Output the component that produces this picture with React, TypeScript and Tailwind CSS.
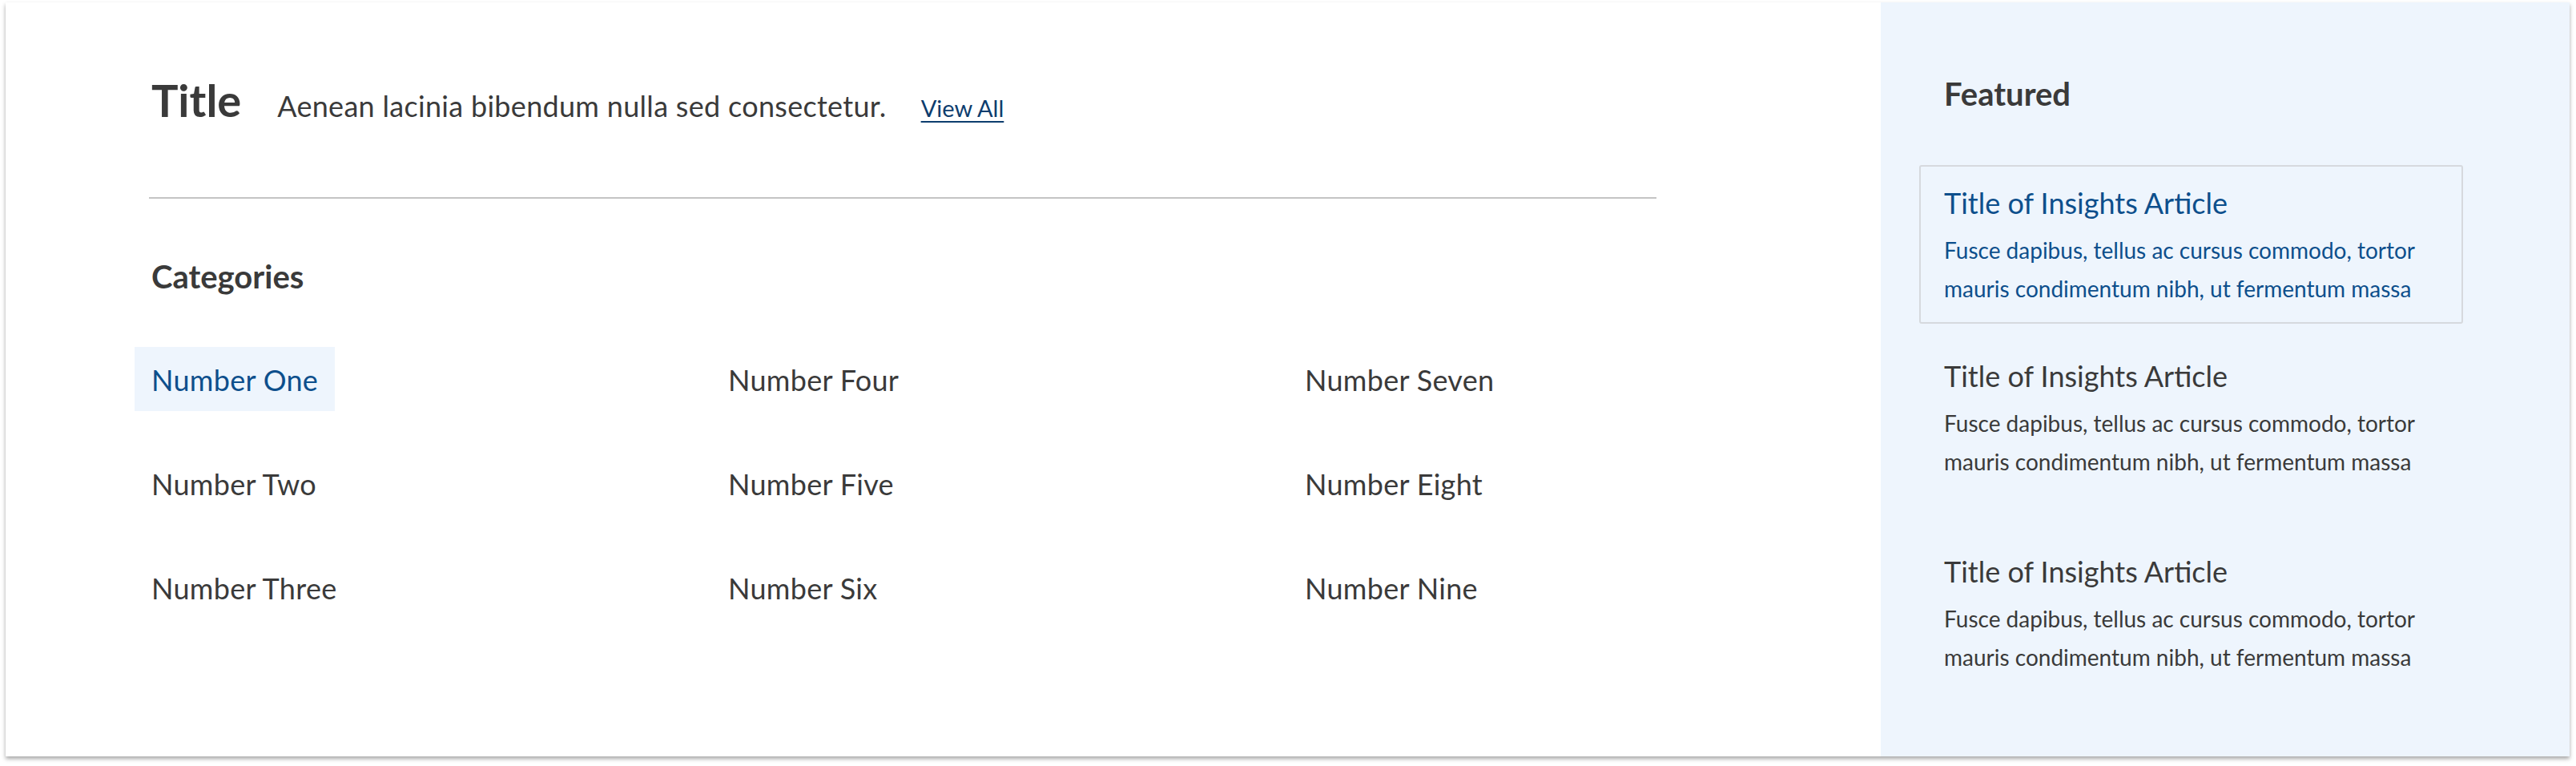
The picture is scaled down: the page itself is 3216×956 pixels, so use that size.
import React from "react";

const cats = [
  "Number One",
  "Number Four",
  "Number Seven",
  "Number Two",
  "Number Five",
  "Number Eight",
  "Number Three",
  "Number Six",
  "Number Nine",
];

const items = [
  { active: true, mt: "mt-[69px]" },
  { active: false, mt: "mt-[18px]" },
  { active: false, mt: "mt-[46px]" },
];

export default function App() {
  return (
    <div
      className="w-[3216px] h-[956px] bg-white overflow-hidden"
      style={{ fontFamily: "Lato, 'Noto Sans', sans-serif" }}
    >
      <div className="ml-[7px] mt-[3px] w-[3201px] h-[941px] flex bg-white shadow-[0_3px_5px_rgba(0,0,0,0.35)]">
        {/* Left section */}
        <div className="w-[2341px] pl-[182px] pt-[94px] flex flex-col">
          <div className="flex items-baseline h-[56px]">
            <h1 className="text-[56px] leading-[56px] font-bold text-[#3a3a3a]">Title</h1>
            <p className="ml-[45px] text-[36px] leading-[56px] tracking-[0.3px] text-[#3a3a3a]">
              Aenean lacinia bibendum nulla sed consectetur.
            </p>
            <a className="ml-[43px] text-[29px] leading-[56px] text-[#0d3d6e] underline decoration-[2px] underline-offset-[5px]">
              View All
            </a>
          </div>
          <div className="mt-[93px] ml-[-3px] w-[1882px] h-[2px] bg-[#c4c4c4]" />
          <h2 className="mt-[77px] text-[40px] leading-[40px] font-bold text-[#3a3a3a]">Categories</h2>
          <div className="mt-[68px] ml-[-21px] grid grid-cols-[720px_720px_720px] gap-y-[50px]">
            {cats.map((c, i) => (
              <div key={c} className="h-[80px]">
                <span
                  className={
                    i === 0
                      ? "inline-block h-[80px] px-[21px] pt-[17px] text-[36px] leading-[48px] tracking-[0.3px] bg-[#eef5fd] text-[#0d4f8c]"
                      : "inline-block h-[80px] px-[21px] pt-[17px] text-[36px] leading-[48px] tracking-[0.3px] text-[#3a3a3a]"
                  }
                >
                  {c}
                </span>
              </div>
            ))}
          </div>
        </div>
        {/* Right panel */}
        <div className="w-[860px] h-full bg-[#eef5fd] pl-[48px] pt-[94px] flex flex-col">
          <h2 className="pl-[31px] text-[40px] leading-[40px] font-bold text-[#3a3a3a]">Featured</h2>
          {items.map((it, i) => (
            <div
              key={i}
              className={
                (it.active
                  ? "border-[2px] border-[#d6d9de] rounded-[3px] "
                  : "border-[2px] border-transparent ") +
                it.mt +
                " w-[679px] h-[198px] px-[29px] pt-[21px]"
              }
            >
              <h3
                className={
                  "text-[36px] leading-[48px] " + (it.active ? "text-[#0d4f8c]" : "text-[#3a3a3a]")
                }
              >
                Title of Insights Article
              </h3>
              <p
                className={
                  "mt-[11px] text-[28px] leading-[48px] " + (it.active ? "text-[#0d4f8c]" : "text-[#3a3a3a]")
                }
              >
                Fusce dapibus, tellus ac cursus commodo, tortor
                <br />
                mauris condimentum nibh, ut fermentum massa
              </p>
            </div>
          ))}
        </div>
      </div>
    </div>
  );
}
